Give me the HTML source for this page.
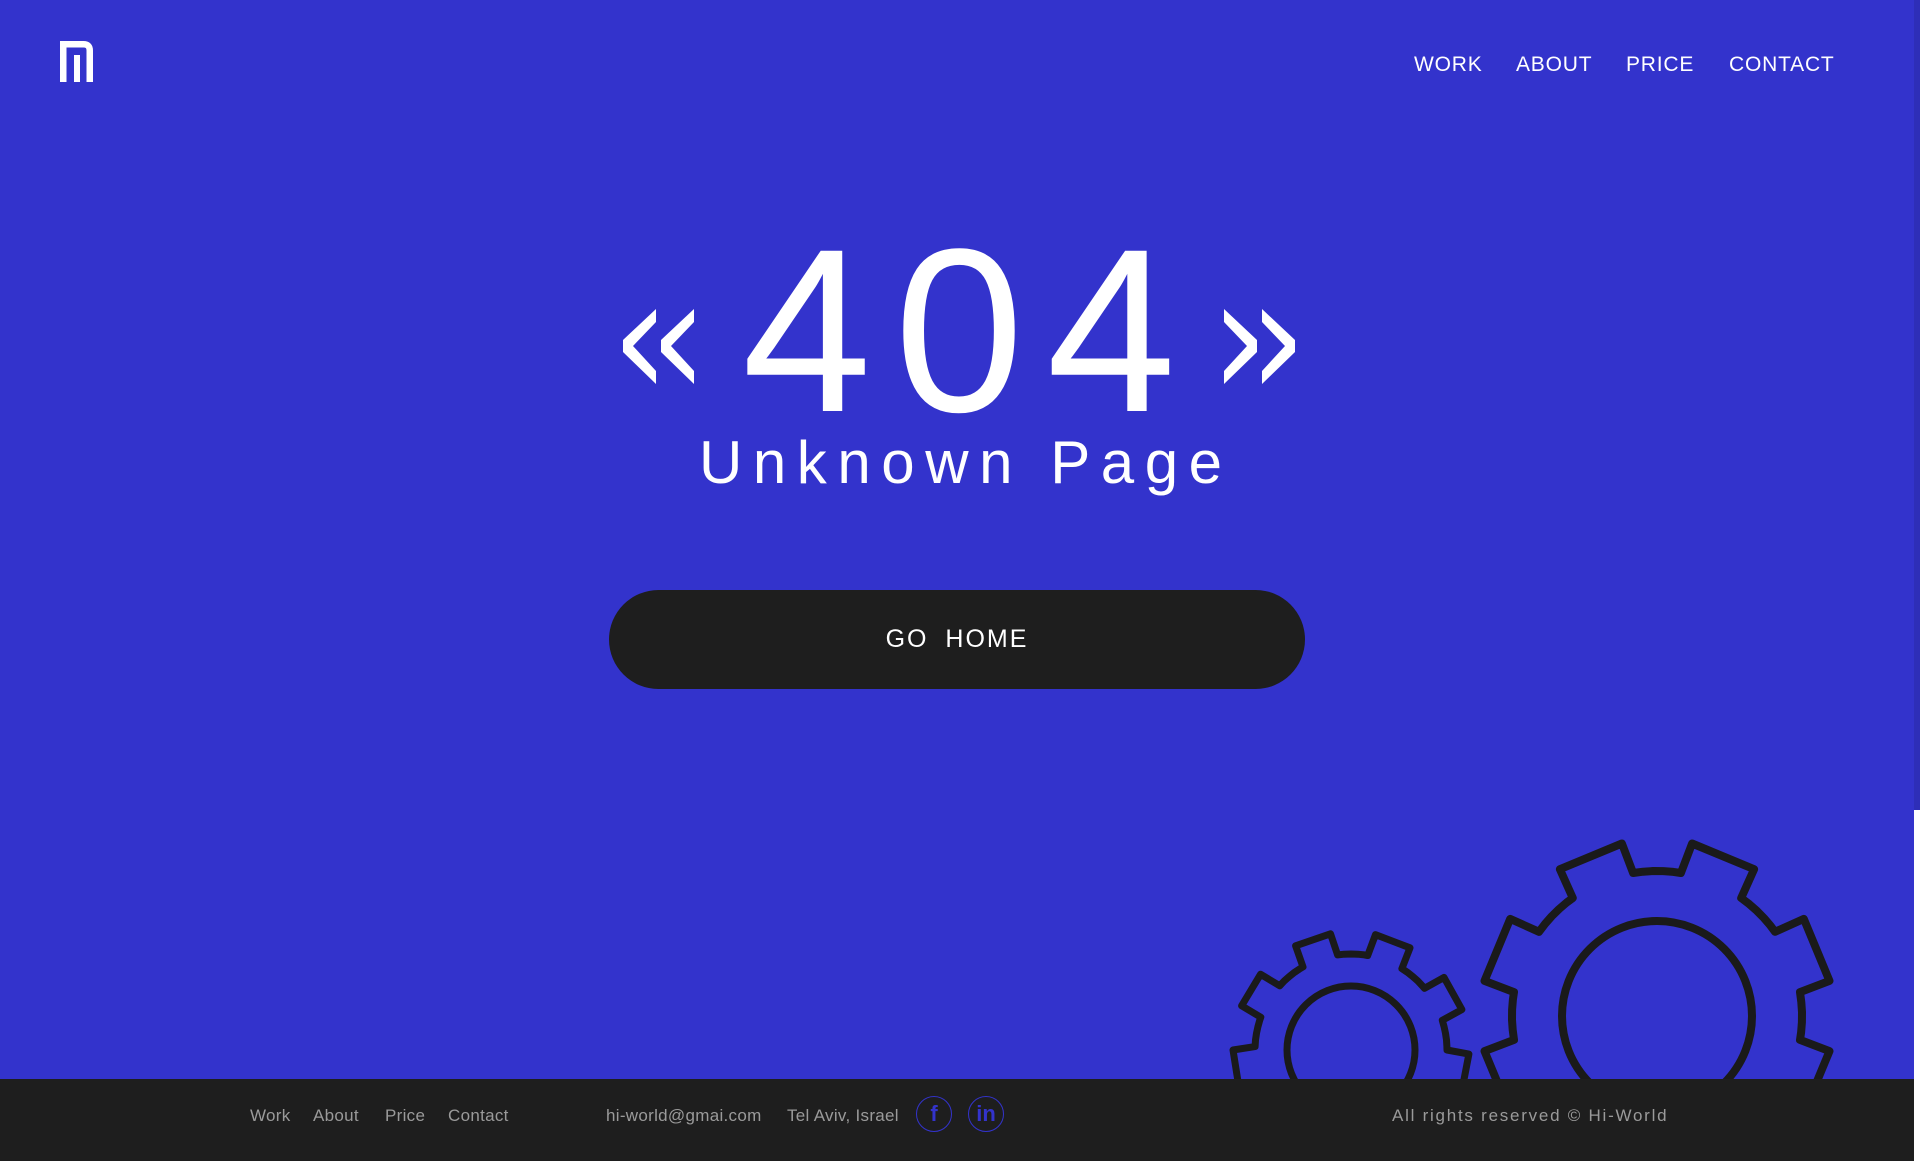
<!DOCTYPE html>
<html><head><meta charset="utf-8"><style>
*{margin:0;padding:0;box-sizing:border-box}
body{width:1920px;height:1161px;overflow:hidden;background:#3333cc;font-family:"Liberation Sans",Arial,sans-serif;position:relative}
.nav{position:absolute;top:53px;color:#fff;font-size:21px;letter-spacing:0.8px}
.foot{position:absolute;left:0;top:1079px;width:1914px;height:82px;background:#1e1e1e;z-index:1}
.ft{position:absolute;top:1106px;color:#9a9a9a;font-size:17px;letter-spacing:0.3px;z-index:2}
.btn{position:absolute;left:609px;top:590px;width:696px;height:99px;border-radius:50px;background:#1e1e1e;color:#fff;font-size:25px;letter-spacing:2px;text-align:center;line-height:99px;word-spacing:8px}
.sc{position:absolute;left:1914px;top:0;width:6px;height:1161px;background:#2e2eb8}
.sc2{position:absolute;left:1914px;top:810px;width:6px;height:351px;background:#fff}
.ic{position:absolute;top:1096px;width:36px;height:36px;border:1.5px solid #3333cc;border-radius:50%;color:#3333cc;font-size:22px;font-weight:bold;text-align:center;line-height:34px;z-index:2}
</style></head><body>
<svg style="position:absolute;left:0;top:0" width="1920" height="1161">
<path d="M63.25 82 V44.25 H83.5 Q89.75 44.25 89.75 50.5 V82" fill="none" stroke="#fff" stroke-width="6.5"/>
<line x1="77" y1="55" x2="77" y2="82" stroke="#fff" stroke-width="6"/>
<g fill="#fff">
<polygon points="656,309 656,322 633,346 656,371 656,384 623,352 623,340"/>
<polygon points="694,309 694,322 671,346 694,371 694,384 661,352 661,340"/>
<polygon points="1224,309 1224,322 1247,346 1224,371 1224,384 1257,352 1257,340"/>
<polygon points="1262,309 1262,322 1285,346 1262,371 1262,384 1295,352 1295,340"/>
</g>
<text x="742" y="411" font-family="Liberation Sans" font-size="233" fill="#fff" textLength="434" lengthAdjust="spacing">404</text>
<text x="699" y="483" font-family="Liberation Sans" font-size="60" fill="#fff" textLength="523" lengthAdjust="spacing">Unknown Page</text>
<g fill="none" stroke="#1a1a1a" stroke-width="8" stroke-linejoin="round">
<circle cx="1657" cy="1016" r="95"/>
<circle cx="1351" cy="1050" r="64" stroke-width="7"/>
</g>
<g id="gears"></g>
</svg>
<div class="nav" style="left:1414px">WORK</div>
<div class="nav" style="left:1516px">ABOUT</div>
<div class="nav" style="left:1626px">PRICE</div>
<div class="nav" style="left:1729px">CONTACT</div>
<div class="btn">GO HOME</div>
<div class="foot"></div>
<div class="ft" style="left:250px">Work</div>
<div class="ft" style="left:313px">About</div>
<div class="ft" style="left:385px">Price</div>
<div class="ft" style="left:448px">Contact</div>
<div class="ft" style="left:606px">hi-world@gmai.com</div>
<div class="ft" style="left:787px">Tel Aviv, Israel</div>
<div class="ic" style="left:916px">f</div>
<div class="ic" style="left:968px">in</div>
<div class="ft" style="left:1392px;letter-spacing:1.75px">All rights reserved © Hi-World</div>
<div class="sc"></div><div class="sc2"></div>
<script>
function gear(cx,cy,rb,rt,n,off,tw,sw){
 var d="",step=360/n,pts=[];
 for(var k=0;k<n;k++){
  var a=off+k*step, h=tw/2, hb=h+2;
  [[a-hb,rb],[a-h,rt],[a+h,rt],[a+hb,rb]].forEach(function(p){pts.push(p)});
  var nx=off+(k+1)*step-hb;
  for(var t=a+hb+4;t<nx;t+=4)pts.push([t,rb]);
 }
 pts.forEach(function(p,i){var r=p[0]*Math.PI/180;var x=cx+p[1]*Math.sin(r),y=cy-p[1]*Math.cos(r);d+=(i?"L":"M")+x.toFixed(1)+" "+y.toFixed(1)});
 d+="Z";
 var e=document.createElementNS("http://www.w3.org/2000/svg","path");
 e.setAttribute("d",d);e.setAttribute("fill","none");e.setAttribute("stroke","#1a1a1a");e.setAttribute("stroke-width",sw);e.setAttribute("stroke-linejoin","round");
 document.getElementById("gears").appendChild(e);
}
gear(1657,1016,145,176,8,22.5,22,8);
gear(1351,1050,96,118,9,21,18,7);
</script>
</body></html>
